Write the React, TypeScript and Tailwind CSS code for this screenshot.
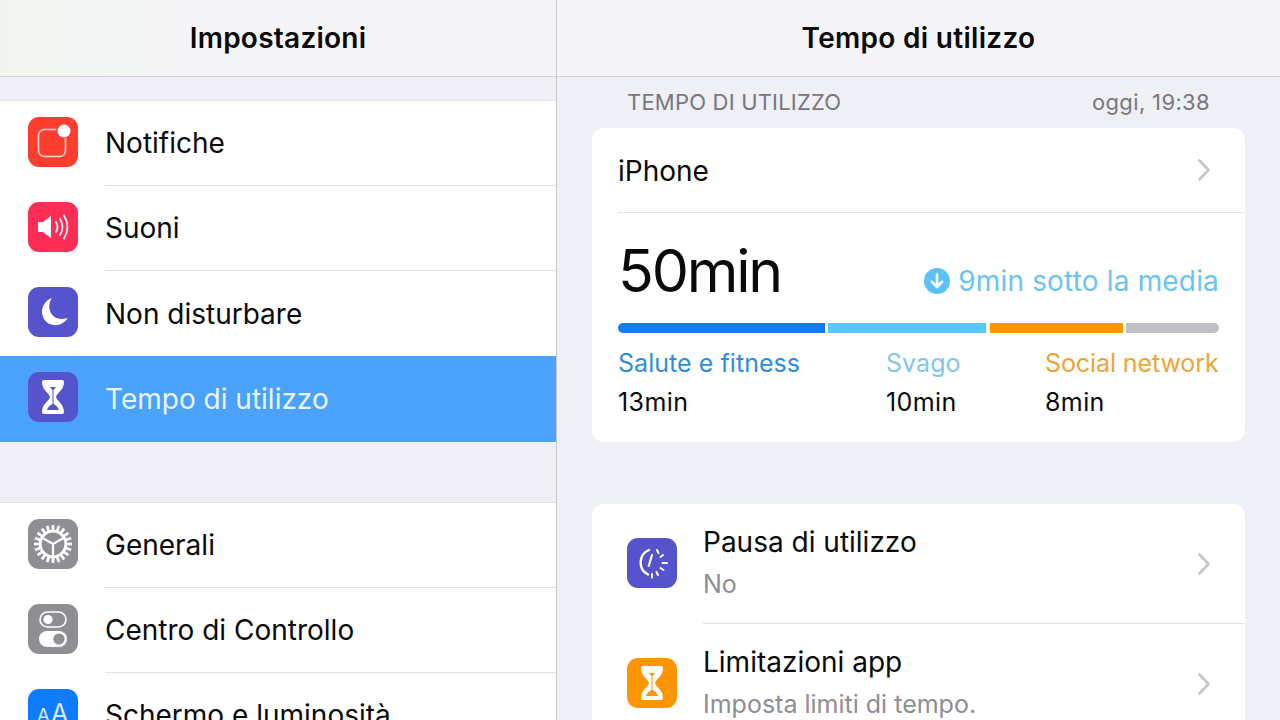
import React from 'react';

const FONT = "font-['Inter','Noto_Sans',sans-serif]";

const Chevron: React.FC = () => (
  <svg width="14" height="24" viewBox="0 0 14 24" fill="none" className="shrink-0">
    <path d="M2.5 2.5 L11.5 12 L2.5 21.5" stroke="#c4c4c9" strokeWidth="2.6" strokeLinecap="round" strokeLinejoin="round" />
  </svg>
);

const IconBox: React.FC<{ color: string; children: React.ReactNode }> = ({ color, children }) => (
  <div className={`w-[50px] h-[50px] mb-[3px] rounded-[11px] flex items-center justify-center shrink-0 ${color}`}>
    {children}
  </div>
);

const BellIcon = () => (
  <svg width="50" height="50" viewBox="0 0 50 50" fill="none">
    <rect x="10.5" y="12.5" width="27" height="27" rx="6" stroke="#ffd9cf" strokeWidth="1.6" />
    <circle cx="36" cy="13.5" r="8" fill="#fd3d2f" />
    <circle cx="36" cy="14" r="6.5" fill="#fff" />
  </svg>
);

const SoundIcon = () => (
  <svg width="50" height="50" viewBox="0 0 50 50" fill="none">
    <path d="M10 20 H15 L23 14 V36 L15 30 H10 Z" fill="#fff" />
    <path d="M28 20 Q31 25 28 30" stroke="#fff" strokeWidth="1.7" strokeLinecap="round" />
    <path d="M32 17 Q37 25 32 33" stroke="#fff" strokeWidth="1.7" strokeLinecap="round" />
    <path d="M36 13.5 Q43 25 36 36.5" stroke="#fff" strokeWidth="1.7" strokeLinecap="round" />
  </svg>
);

const MoonIcon = () => (
  <svg width="50" height="50" viewBox="0 0 50 50" fill="none">
    <path d="M24 11 C16 14 12 22 15 30 C18 38 29 41 36 35 C38 33.5 39 32.5 39.5 31 C31 34 24 30 22 24 C20.5 19 21.5 14.5 24 11 Z" fill="#fff" />
  </svg>
);

const HourglassIcon: React.FC<{ sand: string }> = ({ sand }) => (
  <svg width="50" height="50" viewBox="0 0 50 50" fill="none">
    <path d="M16 8 H34 Q36 8 36 10 C36 18 29 21 28 25 C29 29 36 32 36 40 Q36 42 34 42 H16 Q14 42 14 40 C14 32 21 29 22 25 C21 21 14 18 14 10 Q14 8 16 8 Z" fill="#fff" />
    <path d="M22 15 H28 L25.5 18 V32 C28 33 30 35 31 38 H19 C20 35 22 33 24.5 32 V18 Z" fill={sand} />
  </svg>
);

const GearIcon = () => {
  const teeth = Array.from({ length: 20 }, (_, i) => i * 18);
  return (
    <svg width="50" height="50" viewBox="0 0 50 50" fill="none">
      {teeth.map((deg) => (
        <rect key={deg} x="23.6" y="6" width="2.8" height="6" fill="#fff" transform={`rotate(${deg} 25 25)`} />
      ))}
      <circle cx="25" cy="25" r="12.8" stroke="#fff" strokeWidth="2.8" />
      <path d="M25 25 V37 M25 25 L14.6 19 M25 25 L35.4 19" stroke="#fff" strokeWidth="2.2" />
    </svg>
  );
};

const ToggleIcon = () => (
  <svg width="50" height="50" viewBox="0 0 50 50" fill="none">
    <rect x="12" y="8" width="26" height="15" rx="7.5" stroke="#fff" strokeWidth="1.6" />
    <circle cx="20" cy="15.5" r="4.6" fill="#fff" />
    <rect x="11" y="27" width="28" height="16" rx="8" fill="#fff" />
    <circle cx="31" cy="35" r="5.6" fill="#8e8e93" />
  </svg>
);

const PauseIcon = () => (
  <svg width="50" height="50" viewBox="0 0 50 50" fill="none">
    <path d="M22 12 A13.5 13.5 0 0 0 21 36.5" stroke="#fff" strokeWidth="2.4" strokeLinecap="round" />
    <path d="M25 17 L21.7 28" stroke="#fff" strokeWidth="2.2" strokeLinecap="round" />
    <path d="M30 12 L31.5 15 M36 17 L33.5 19 M40 25 H35.5 M36.5 32 L33.5 30 M31 37 L29.5 34 M25 39.5 V36" stroke="#fff" strokeWidth="2" strokeLinecap="round" />
  </svg>
);

const SideRow: React.FC<{
  label: string;
  icon: React.ReactNode;
  color: string;
  selected?: boolean;
  last?: boolean;
}> = ({ label, icon, color, selected, last }) => (
  <div className={`shrink-0 pl-[28px] flex items-center gap-[27px] ${selected ? 'h-[85.5px] bg-[#4aa2fb]' : 'h-[85px] bg-white'}`}>
    <IconBox color={color}>{icon}</IconBox>
    <div className={`flex-1 h-full flex items-center text-[28px] ${selected ? 'text-[#eaf5ff]' : 'text-[#0a0a0a]'} ${last || selected ? '' : 'border-b border-[#e2e2e6]'}`}>
      {label}
    </div>
  </div>
);

const Sidebar: React.FC = () => (
  <div className="w-[557px] shrink-0 h-full border-r border-[#c9c9cd] bg-[#efeff5] flex flex-col">
    <div className="h-[77px] shrink-0 bg-gradient-to-r from-[#f0f6ef] via-[#f5f5f7] via-30% to-[#f5f5f8] border-b border-[#d6d6da] flex items-center justify-center text-[28px] font-semibold tracking-[0.25px] text-[#0a0a0a]">
      Impostazioni
    </div>
    <div className="h-6 shrink-0 border-b border-[#e2e2e7]" />
    <SideRow label="Notifiche" color="bg-[#fd3d2f]" icon={<BellIcon />} />
    <SideRow label="Suoni" color="bg-[#fd2d55]" icon={<SoundIcon />} />
    <SideRow label="Non disturbare" color="bg-[#5654cc]" icon={<MoonIcon />} last />
    <SideRow label="Tempo di utilizzo" color="bg-[#5654cc]" icon={<HourglassIcon sand="#5654cc" />} selected />
    <div className="h-[61px] shrink-0 border-b border-[#e2e2e7]" />
    <SideRow label="Generali" color="bg-[#8e8e93]" icon={<GearIcon />} />
    <SideRow label="Centro di Controllo" color="bg-[#8e8e93]" icon={<ToggleIcon />} />
    <SideRow
      label="Schermo e luminosità"
      color="bg-[#0f7cfb]"
      icon={<span className="text-[#d8ebff] text-[25px] tracking-[1px] leading-none"><span className="text-[19px]">A</span>A</span>}
      last
    />
  </div>
);

const SettingRow: React.FC<{
  title: string;
  subtitle: string;
  icon: React.ReactNode;
  color: string;
  textLift: string;
  separator?: boolean;
}> = ({ title, subtitle, icon, color, textLift, separator }) => (
  <div className="h-[120px] shrink-0 pl-[35px] flex items-center gap-[26px]">
    <IconBox color={color}>{icon}</IconBox>
    <div className={`flex-1 h-full flex items-center pr-[34px] ${separator ? 'border-b border-[#e2e2e6]' : ''}`}>
      <div className={`flex-1 flex flex-col gap-[8px] ${textLift}`}>
        <span className="text-[28px] leading-[34px] text-[#0a0a0a]">{title}</span>
        <span className="text-[25px] leading-[34px] text-[#8e8e93]">{subtitle}</span>
      </div>
      <Chevron />
    </div>
  </div>
);

const Category: React.FC<{ label: string; value: string; labelColor: string; width: string; tracking: string }> = ({ label, value, labelColor, width, tracking }) => (
  <div className={`flex flex-col gap-[8px] ${width}`}>
    <span className={`text-[25px] leading-[31px] whitespace-nowrap ${tracking} ${labelColor}`}>{label}</span>
    <span className="text-[25px] leading-[31px] tracking-[0.4px] text-[#0a0a0a]">{value}</span>
  </div>
);

const Detail: React.FC = () => (
  <div className="flex-1 min-w-0 h-full bg-[#efeff6] flex flex-col">
    <div className="h-[77px] shrink-0 bg-[#f5f5f8] border-b border-[#d6d6da] flex items-center justify-center text-[28px] font-semibold tracking-[0.3px] text-[#0a0a0a]">
      Tempo di utilizzo
    </div>
    <div className="h-[51px] shrink-0 pl-[70px] pr-[70px] flex items-center justify-between text-[22px] text-[#77777c]">
      <span className="tracking-[0.2px]">TEMPO DI UTILIZZO</span>
      <span className="tracking-[0.35px]">oggi, 19:38</span>
    </div>
    <div className="mx-[35px] h-[314px] shrink-0 bg-white rounded-[12px] pl-[26px] flex flex-col">
      <div className="h-[85px] shrink-0 pr-[34px] flex items-center justify-between border-b border-[#e2e2e6]">
        <span className="text-[28px] mt-[1px] text-[#0a0a0a]">iPhone</span>
        <Chevron />
      </div>
      <div className="pr-[26px] flex flex-col">
        <div className="h-[110px] flex items-center justify-between">
          <span className="text-[59px] mt-[4px] tracking-[-2.2px] text-[#0a0a0a] leading-none">50min</span>
          <span className="flex items-center gap-[8px] mt-[25px] text-[28px] tracking-[0.17px] text-[#6bc4ee]">
            <svg width="26" height="26" viewBox="0 0 26 26" fill="none">
              <circle cx="13" cy="13" r="13" fill="#5ac2f7" />
              <path d="M13 6.5 V18.5 M8 13.8 L13 19 L18 13.8" stroke="#fff" strokeWidth="2.6" strokeLinecap="round" strokeLinejoin="round" />
            </svg>
            9min sotto la media
          </span>
        </div>
        <div className="h-[10px] flex gap-[3px]">
          <div className="w-[207px] bg-[#0f7cfb] rounded-l-full" />
          <div className="w-[158px] bg-[#5ac8fa]" />
          <div className="w-[133px] bg-[#ff9500] ml-[1px]" />
          <div className="flex-1 bg-[#c0c0c6] rounded-r-full" />
        </div>
        <div className="flex mt-[15px]">
          <Category label="Salute e fitness" value="13min" labelColor="text-[#2d8ee0]" width="w-[268px]" tracking="tracking-[0.05px]" />
          <Category label="Svago" value="10min" labelColor="text-[#82c6e8]" width="w-[159px]" tracking="tracking-[0.05px]" />
          <Category label="Social network" value="8min" labelColor="text-[#eda534]" width="flex-1" tracking="tracking-[-0.1px]" />
        </div>
      </div>
    </div>
    <div className="mx-[35px] mt-[62px] flex-1 bg-white rounded-t-[12px] flex flex-col overflow-hidden">
      <SettingRow title="Pausa di utilizzo" subtitle="No" color="bg-[#5654cc]" icon={<PauseIcon />} textLift="mb-[2px]" separator />
      <SettingRow title="Limitazioni app" subtitle="Imposta limiti di tempo." color="bg-[#ff9500]" icon={<HourglassIcon sand="#ff9500" />} textLift="mb-[3px]" />
    </div>
  </div>
);

export default function App() {
  return (
    <div className={`w-[1280px] h-[720px] overflow-hidden flex ${FONT}`}>
      <Sidebar />
      <Detail />
    </div>
  );
}
